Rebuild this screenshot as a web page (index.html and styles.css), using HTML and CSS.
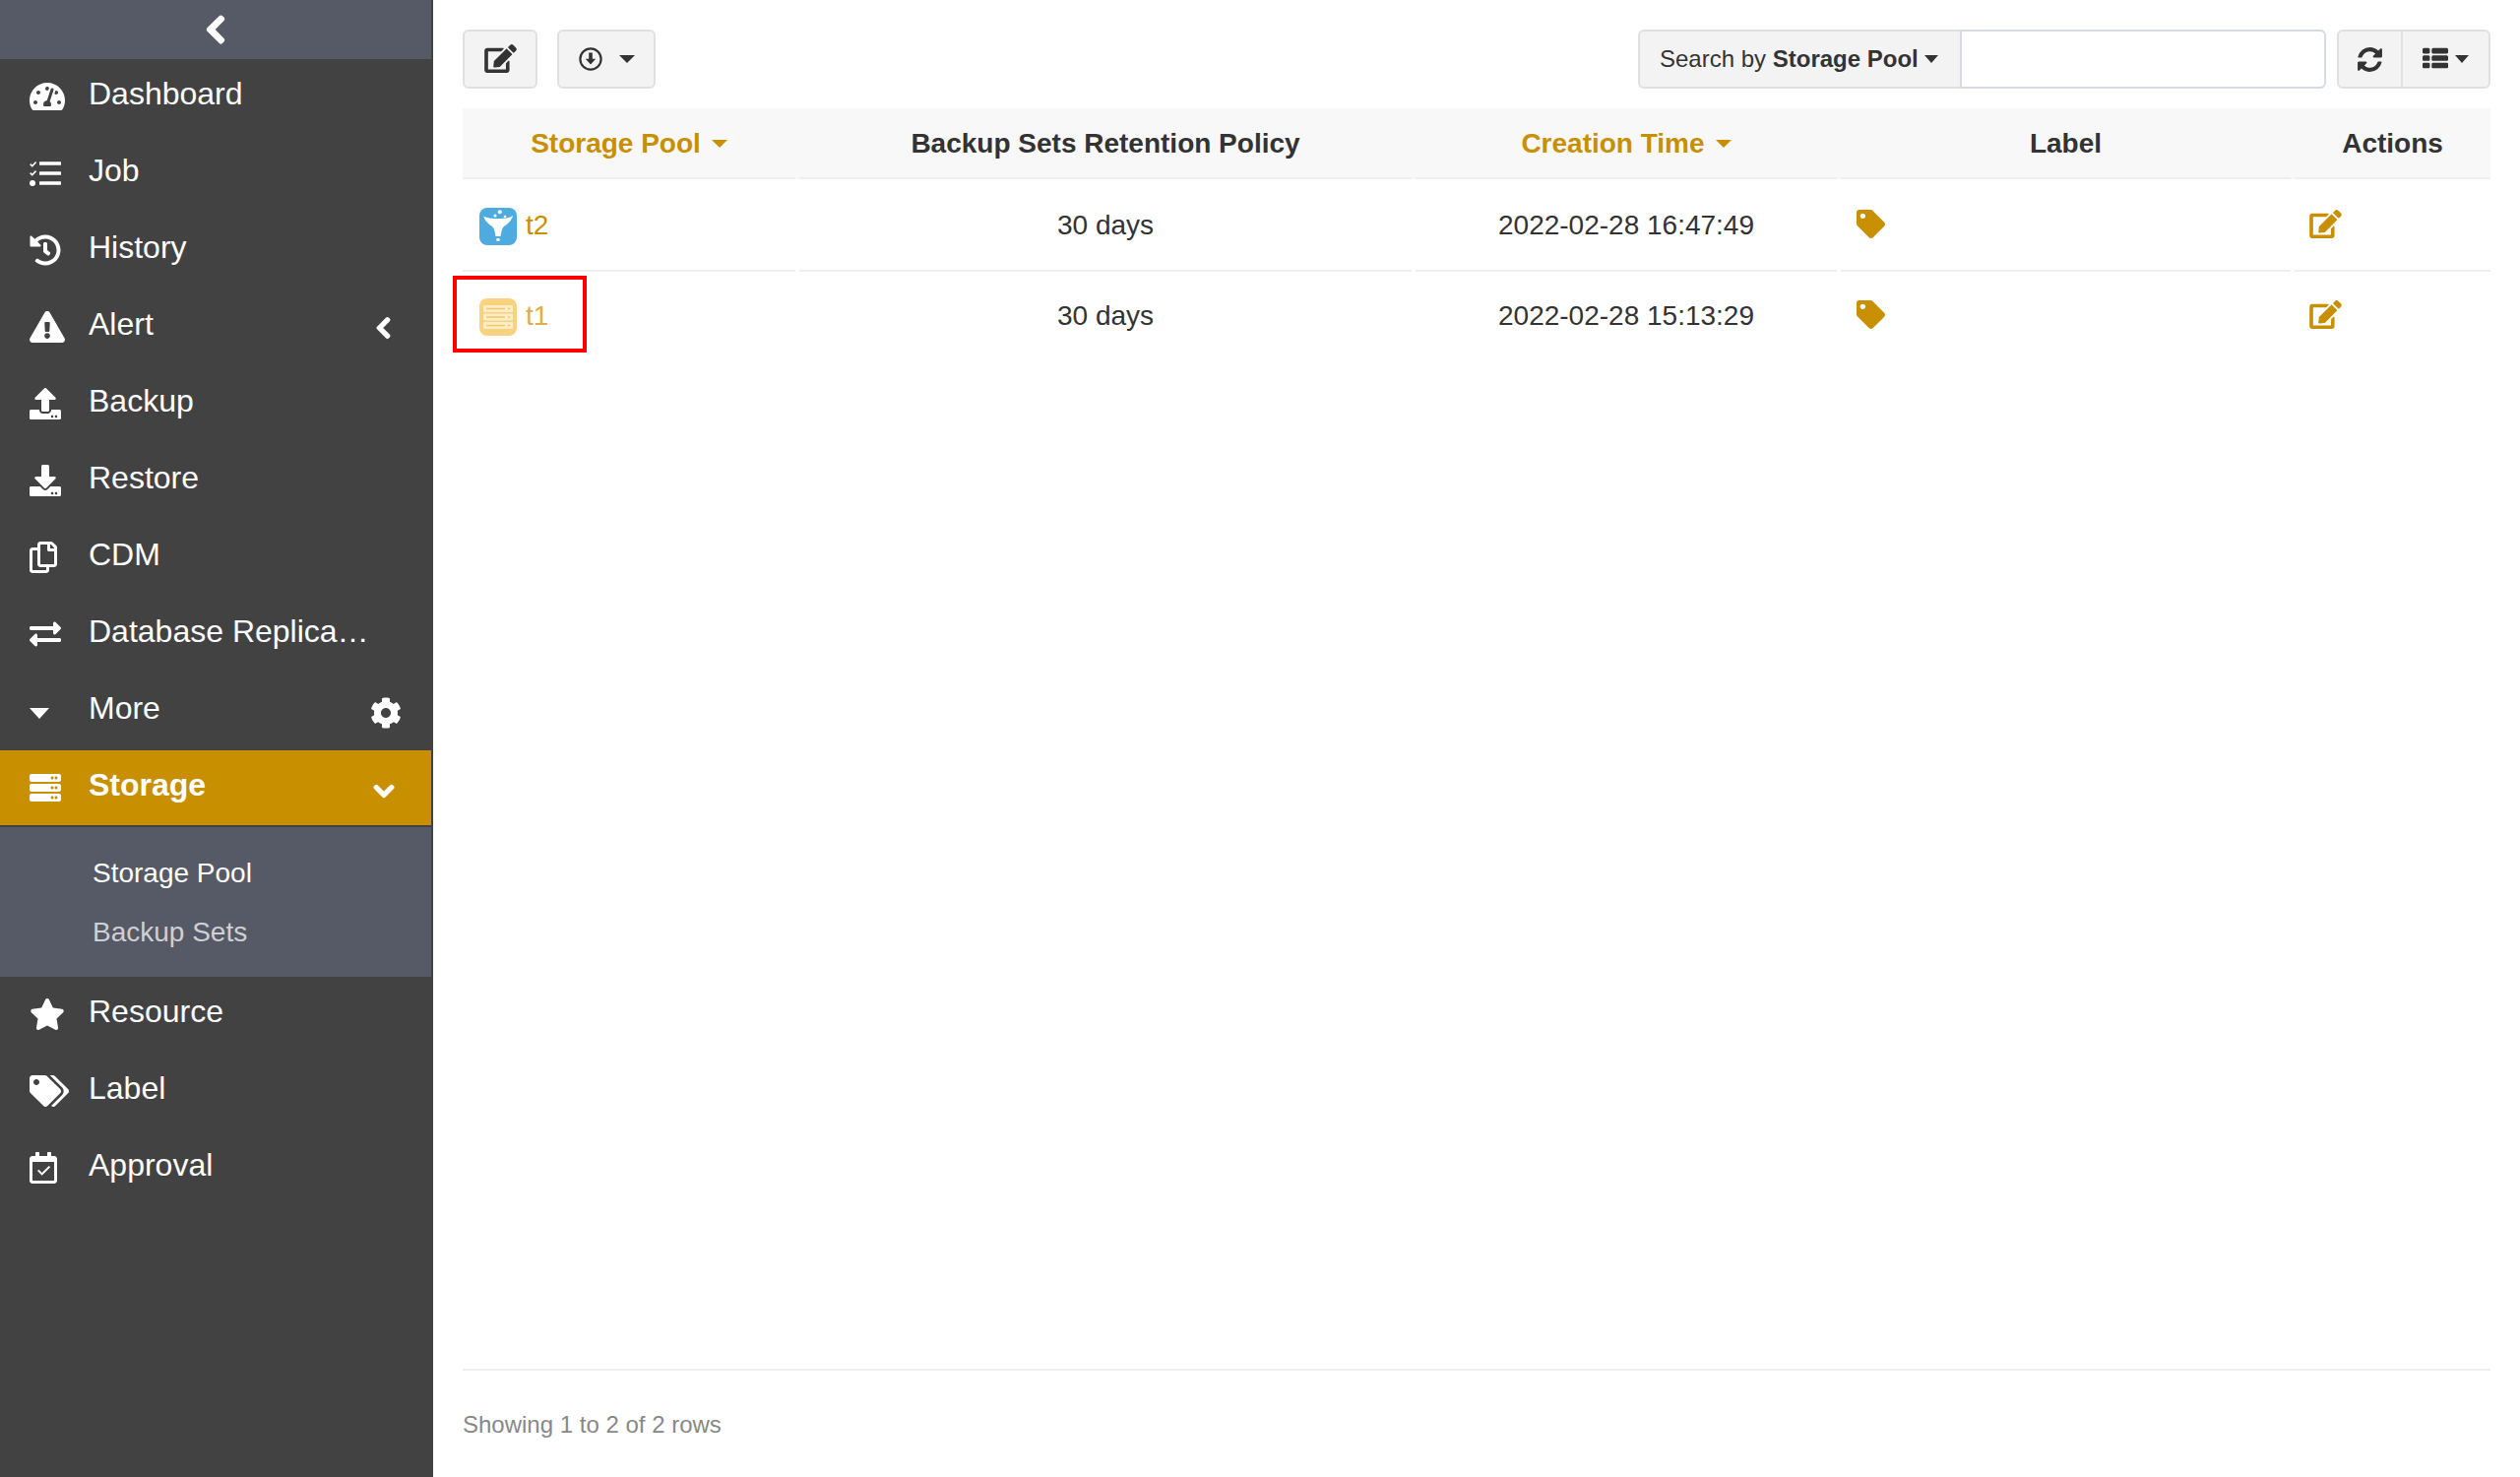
FILE: index.html
```html
<!DOCTYPE html>
<html>
<head>
    <title>Storage Pool</title>
    <link rel="stylesheet" href="styles.css">
</head>
<body>
    <svg class="icon-defs" width="0" height="0">
        <defs>
            <path id="i-tag" d="M0 252.118V48C0 21.49 21.49 0 48 0h204.118a48 48 0 0 1 33.941 14.059l211.882 211.882c18.745 18.745 18.745 49.137 0 67.882L293.823 497.941c-18.745 18.745-49.137 18.745-67.882 0L14.059 286.059A48 48 0 0 1 0 252.118zM112 64c-26.51 0-48 21.49-48 48s21.49 48 48 48 48-21.49 48-48-21.49-48-48-48z"/>
            <path id="i-edit" d="M402.6 83.2l90.2 90.2c3.8 3.8 3.8 10 0 13.8L274.4 405.6l-92.8 10.3c-12.4 1.4-22.9-9.1-21.5-21.5l10.3-92.8L388.8 83.2c3.8-3.8 10-3.8 13.8 0zm162-22.9l-48.8-48.8c-15.2-15.2-39.9-15.2-55.2 0l-35.4 35.4c-3.8 3.8-3.8 10 0 13.8l90.2 90.2c3.8 3.8 10 3.8 13.8 0l35.4-35.4c15.2-15.3 15.2-40 0-55.2zM384 346.2V448H64V128h229.8c3.2 0 6.2-1.3 8.5-3.5l40-40c7.6-7.6 2.2-20.5-8.5-20.5H48C21.5 64 0 85.5 0 112v352c0 26.5 21.5 48 48 48h352c26.5 0 48-21.5 48-48V306.2c0-10.7-12.9-16-20.5-8.5l-40 40c-2.2 2.3-3.5 5.3-3.5 8.5z"/>
            <path id="i-chevron-left" d="M34.52 239.03L228.87 44.69c9.37-9.37 24.57-9.37 33.94 0l22.67 22.67c9.36 9.36 9.37 24.52.04 33.9L131.49 256l154.02 154.75c9.34 9.38 9.32 24.54-.04 33.9l-22.67 22.67c-9.37 9.37-24.57 9.37-33.94 0L34.52 272.97c-9.37-9.37-9.37-24.57 0-33.94z"/>
        </defs>
    </svg>

    <div class="layout">
        <nav class="sidebar">
            <div class="collapse-bar">
                <svg class="chevron-big" viewBox="0 0 320 512"><use href="#i-chevron-left"/></svg>
            </div>
            <ul class="menu">
                <li><a class="menu-item">
                    <span class="menu-icon"><svg viewBox="0 0 576 512"><path d="M288 32C128.94 32 0 160.94 0 320c0 52.8 14.25 102.26 39.06 144.8 5.61 9.62 16.3 15.2 27.44 15.2h443c11.14 0 21.83-5.58 27.44-15.2C561.75 422.26 576 372.8 576 320c0-159.06-128.94-288-288-288zm0 64c14.71 0 26.58 10.13 30.32 23.65-1.11 2.26-2.64 4.23-3.45 6.67l-9.22 27.67c-5.13 3.49-10.97 6.01-17.64 6.01-17.67 0-32-14.33-32-32S270.33 96 288 96zM96 384c-17.67 0-32-14.33-32-32s14.33-32 32-32 32 14.33 32 32-14.33 32-32 32zm48-160c-17.67 0-32-14.33-32-32s14.33-32 32-32 32 14.33 32 32-14.33 32-32 32zm246.77-72.41l-61.33 184C343.13 347.33 352 364.54 352 384c0 11.72-3.38 22.55-8.88 32H232.88c-5.5-9.45-8.88-20.28-8.88-32 0-33.94 26.5-61.43 59.9-63.59l61.34-184.01c4.17-12.56 17.73-19.45 30.36-15.17 12.57 4.19 19.35 17.79 15.17 30.36zm14.66 57.2l15.52-46.55c3.47-1.29 7.13-2.23 11.05-2.23 17.67 0 32 14.33 32 32s-14.33 32-32 32c-11.38-.01-20.89-6.28-26.57-15.22zM480 384c-17.67 0-32-14.33-32-32s14.33-32 32-32 32 14.33 32 32-14.33 32-32 32z"/></svg></span>
                    <span class="menu-label">Dashboard</span>
                </a></li>
                <li><a class="menu-item">
                    <span class="menu-icon"><svg viewBox="0 0 512 512"><path d="M20 96l24 24 52-56 18 18-70 74-42-42zM20 240l24 24 52-56 18 18-70 74-42-42z"/><circle cx="48" cy="416" r="48"/><rect x="160" y="68" width="352" height="56" rx="10"/><rect x="160" y="228" width="352" height="56" rx="10"/><rect x="160" y="388" width="352" height="56" rx="10"/></svg></span>
                    <span class="menu-label">Job</span>
                </a></li>
                <li><a class="menu-item">
                    <span class="menu-icon"><svg viewBox="0 0 512 512"><path d="M504 255.531c.253 136.64-111.18 248.372-247.82 248.468-59.015.042-113.223-20.53-155.822-54.911-11.077-8.94-11.905-25.541-1.839-35.607l11.267-11.267c8.609-8.609 22.353-9.551 31.891-1.984C173.062 425.135 212.781 440 256 440c101.705 0 184-82.311 184-184 0-101.705-82.311-184-184-184-48.814 0-93.149 18.969-126.068 49.932l50.754 50.754c10.08 10.08 2.941 27.314-11.313 27.314H24c-8.837 0-16-7.163-16-16V38.627c0-14.254 17.234-21.393 27.314-11.314l49.372 49.372C129.209 34.136 189.552 8 256 8c136.81 0 247.747 110.78 248 247.531zm-180.912 78.784l9.823-12.63c8.138-10.463 6.253-25.542-4.21-33.679L288 256.349V152c0-13.255-10.745-24-24-24h-16c-13.255 0-24 10.745-24 24v135.651l65.409 50.874c10.463 8.137 25.541 6.253 33.679-4.21z"/></svg></span>
                    <span class="menu-label">History</span>
                </a></li>
                <li><a class="menu-item">
                    <span class="menu-icon"><svg viewBox="0 0 576 512"><path d="M569.517 440.013C587.975 472.007 564.806 512 527.94 512H48.054c-36.937 0-59.999-40.055-41.577-71.987L246.423 23.985c18.467-32.009 64.72-31.951 83.154 0l239.94 416.028zM288 354c-25.405 0-46 20.595-46 46s20.595 46 46 46 46-20.595 46-46-20.595-46-46-46zm-43.673-165.346l7.418 136c.347 6.364 5.609 11.346 11.982 11.346h48.546c6.373 0 11.635-4.982 11.982-11.346l7.418-136c.375-6.874-5.098-12.654-11.982-12.654h-63.383c-6.884 0-12.356 5.78-11.981 12.654z"/></svg></span>
                    <span class="menu-label">Alert</span>
                    <svg class="chevron-small" viewBox="0 0 320 512"><use href="#i-chevron-left"/></svg>
                </a></li>
                <li><a class="menu-item">
                    <span class="menu-icon"><svg viewBox="0 0 512 512"><path d="M296 384h-80c-13.3 0-24-10.7-24-24V192h-87.7c-17.8 0-26.7-21.5-14.1-34.1L242.3 5.7c7.5-7.5 19.8-7.5 27.3 0l152.2 152.2c12.6 12.6 3.7 34.1-14.1 34.1H320v168c0 13.3-10.7 24-24 24zm216-8v112c0 13.3-10.7 24-24 24H24c-13.3 0-24-10.7-24-24V376c0-13.3 10.7-24 24-24h136v8c0 30.9 25.1 56 56 56h80c30.9 0 56-25.1 56-56v-8h136c13.3 0 24 10.7 24 24zm-124 88c0-11-9-20-20-20s-20 9-20 20 9 20 20 20 20-9 20-20zm64 0c0-11-9-20-20-20s-20 9-20 20 9 20 20 20 20-9 20-20z"/></svg></span>
                    <span class="menu-label">Backup</span>
                </a></li>
                <li><a class="menu-item">
                    <span class="menu-icon"><svg viewBox="0 0 512 512"><path d="M216 0h80c13.3 0 24 10.7 24 24v168h87.7c17.8 0 26.7 21.5 14.1 34.1L269.7 378.3c-7.5 7.5-19.8 7.5-27.3 0L90.1 226.1c-12.6-12.6-3.7-34.1 14.1-34.1H192V24c0-13.3 10.7-24 24-24zm296 376v112c0 13.3-10.7 24-24 24H24c-13.3 0-24-10.7-24-24V376c0-13.3 10.7-24 24-24h146.7l49 49c20.1 20.1 52.5 20.1 72.6 0l49-49H488c13.3 0 24 10.7 24 24zm-124 88c0-11-9-20-20-20s-20 9-20 20 9 20 20 20 20-9 20-20zm64 0c0-11-9-20-20-20s-20 9-20 20 9 20 20 20 20-9 20-20z"/></svg></span>
                    <span class="menu-label">Restore</span>
                </a></li>
                <li><a class="menu-item">
                    <span class="menu-icon"><svg viewBox="0 0 448 512"><path d="M433.941 65.941l-51.882-51.882A48 48 0 0 0 348.118 0H176c-26.51 0-48 21.49-48 48v48H48c-26.51 0-48 21.49-48 48v320c0 26.51 21.49 48 48 48h224c26.51 0 48-21.49 48-48v-48h80c26.51 0 48-21.49 48-48V99.882a48 48 0 0 0-14.059-33.941zM266 464H54a6 6 0 0 1-6-6V150a6 6 0 0 1 6-6h74v224c0 26.51 21.49 48 48 48h96v42a6 6 0 0 1-6 6zm128-96H182a6 6 0 0 1-6-6V54a6 6 0 0 1 6-6h106v88c0 13.255 10.745 24 24 24h88v202a6 6 0 0 1-6 6zm6-256h-64V48h9.632c1.591 0 3.117.632 4.243 1.757l48.368 48.368a6 6 0 0 1 1.757 4.243V112z"/></svg></span>
                    <span class="menu-label">CDM</span>
                </a></li>
                <li><a class="menu-item">
                    <span class="menu-icon"><svg viewBox="0 0 512 512"><path d="M0 168v-16c0-13.255 10.745-24 24-24h360V80c0-21.367 25.899-32.042 40.971-16.971l80 80c9.372 9.373 9.372 24.569 0 33.941l-80 80C409.956 271.982 384 261.456 384 240v-48H24c-13.255 0-24-10.745-24-24zm488 152H128v-48c0-21.314-25.862-32.08-40.971-16.971l-80 80c-9.372 9.373-9.372 24.569 0 33.941l80 80C102.057 463.997 128 453.437 128 432v-48h360c13.255 0 24-10.745 24-24v-16c0-13.255-10.745-24-24-24z"/></svg></span>
                    <span class="menu-label">Database Replica…</span>
                </a></li>
                <li><a class="menu-item">
                    <span class="menu-icon"><i class="more-caret"></i></span>
                    <span class="menu-label">More</span>
                    <svg class="gear" viewBox="0 0 512 512"><path d="M487.4 315.7l-42.6-24.6c4.3-23.2 4.3-47 0-70.2l42.6-24.6c4.9-2.8 7.1-8.6 5.5-14-11.1-35.6-30-67.8-54.7-94.6-3.8-4.1-10-5.1-14.8-2.3L380.8 110c-17.9-15.4-38.5-27.3-60.8-35.1V25.8c0-5.6-3.9-10.5-9.4-11.7-36.7-8.2-74.3-7.8-109.2 0-5.5 1.2-9.4 6.1-9.4 11.7V75c-22.2 7.9-42.8 19.8-60.8 35.1L88.7 85.5c-4.9-2.8-11-1.9-14.8 2.3-24.7 26.7-43.6 58.9-54.7 94.6-1.7 5.4.6 11.2 5.5 14L67.3 221c-4.3 23.2-4.3 47 0 70.2l-42.6 24.6c-4.9 2.8-7.1 8.6-5.5 14 11.1 35.6 30 67.8 54.7 94.6 3.8 4.1 10 5.1 14.8 2.3l42.6-24.6c17.9 15.4 38.5 27.3 60.8 35.1v49.2c0 5.6 3.9 10.5 9.4 11.7 36.7 8.2 74.3 7.8 109.2 0 5.5-1.2 9.4-6.1 9.4-11.7v-49.2c22.2-7.9 42.8-19.8 60.8-35.1l42.6 24.6c4.9 2.8 11 1.9 14.8-2.3 24.7-26.7 43.6-58.9 54.7-94.6 1.5-5.5-.7-11.3-5.6-14.1zM256 336c-44.1 0-80-35.9-80-80s35.9-80 80-80 80 35.9 80 80-35.9 80-80 80z"/></svg>
                </a></li>
                <li><a class="menu-item active">
                    <span class="menu-icon"><svg viewBox="0 0 512 512"><path d="M480 160H32c-17.673 0-32-14.327-32-32V64c0-17.673 14.327-32 32-32h448c17.673 0 32 14.327 32 32v64c0 17.673-14.327 32-32 32zm-48-88c-13.255 0-24 10.745-24 24s10.745 24 24 24 24-10.745 24-24-10.745-24-24-24zm-64 0c-13.255 0-24 10.745-24 24s10.745 24 24 24 24-10.745 24-24-10.745-24-24-24zm112 248H32c-17.673 0-32-14.327-32-32v-64c0-17.673 14.327-32 32-32h448c17.673 0 32 14.327 32 32v64c0 17.673-14.327 32-32 32zm-48-88c-13.255 0-24 10.745-24 24s10.745 24 24 24 24-10.745 24-24-10.745-24-24-24zm-64 0c-13.255 0-24 10.745-24 24s10.745 24 24 24 24-10.745 24-24-10.745-24-24-24zm112 248H32c-17.673 0-32-14.327-32-32v-64c0-17.673 14.327-32 32-32h448c17.673 0 32 14.327 32 32v64c0 17.673-14.327 32-32 32zm-48-88c-13.255 0-24 10.745-24 24s10.745 24 24 24 24-10.745 24-24-10.745-24-24-24zm-64 0c-13.255 0-24 10.745-24 24s10.745 24 24 24 24-10.745 24-24-10.745-24-24-24z"/></svg></span>
                    <span class="menu-label">Storage</span>
                    <svg class="chevron-down" viewBox="0 0 448 512"><path d="M207.029 381.476L12.686 187.132c-9.373-9.373-9.373-24.569 0-33.941l22.667-22.667c9.357-9.357 24.522-9.375 33.901-.04L224 284.505l154.745-154.021c9.379-9.335 24.544-9.317 33.901.04l22.667 22.667c9.373 9.373 9.373 24.569 0 33.941L240.971 381.476c-9.373 9.372-24.569 9.372-33.942 0z"/></svg>
                </a>
                <ul class="submenu">
                    <li class="sub-current">Storage Pool</li>
                    <li>Backup Sets</li>
                </ul>
                </li>
                <li><a class="menu-item">
                    <span class="menu-icon"><svg viewBox="0 0 576 512"><path d="M259.3 17.8L194 150.2 47.9 171.5c-26.2 3.8-36.7 36.1-17.7 54.6l105.7 103-25 145.5c-4.5 26.3 23.2 46 46.4 33.7L288 439.6l130.7 68.7c23.2 12.2 50.9-7.4 46.4-33.7l-25-145.5 105.7-103c19-18.5 8.5-50.8-17.7-54.6L382 150.2 316.7 17.8c-11.7-23.6-45.6-23.9-57.4 0z"/></svg></span>
                    <span class="menu-label">Resource</span>
                </a></li>
                <li><a class="menu-item">
                    <span class="menu-icon"><svg viewBox="0 0 640 512"><path d="M497.941 225.941L286.059 14.059A48 48 0 0 0 252.118 0H48C21.49 0 0 21.49 0 48v204.118a48 48 0 0 0 14.059 33.941l211.882 211.882c18.744 18.745 49.136 18.746 67.882 0l204.118-204.118c18.745-18.745 18.745-49.137 0-67.882zM112 160c-26.51 0-48-21.49-48-48s21.49-48 48-48 48 21.49 48 48-21.49 48-48 48zm513.941 133.823L421.823 497.941c-18.745 18.745-49.137 18.745-67.882 0l-.36-.36L527.64 323.522c16.999-16.999 26.36-39.6 26.36-63.64s-9.362-46.641-26.36-63.64L331.397 0h48.721a48 48 0 0 1 33.941 14.059l211.882 211.882c18.745 18.745 18.745 49.137 0 67.882z"/></svg></span>
                    <span class="menu-label">Label</span>
                </a></li>
                <li><a class="menu-item">
                    <span class="menu-icon"><svg viewBox="0 0 448 512"><path fill-rule="evenodd" d="M400 64h-48V12c0-6.627-5.373-12-12-12h-40c-6.627 0-12 5.373-12 12v52H160V12c0-6.627-5.373-12-12-12h-40c-6.627 0-12 5.373-12 12v52H48C21.49 64 0 85.49 0 112v352c0 26.51 21.49 48 48 48h352c26.51 0 48-21.49 48-48V112c0-26.51-21.49-48-48-48zM54 464a6 6 0 0 1-6-6V160h352v298a6 6 0 0 1-6 6H54z"/><path d="M338 244l-22-22-114 112-52-52-22 22 74 74z"/></svg></span>
                    <span class="menu-label">Approval</span>
                </a></li>
            </ul>
        </nav>

        <main class="content">
            <div class="toolbar">
                <div class="toolbar-left">
                    <button class="btn btn-new"><svg class="ico-edit" viewBox="0 0 576 512"><use href="#i-edit"/></svg></button>
                    <button class="btn btn-export">
                        <svg class="ico-download" viewBox="0 0 24 24"><circle cx="12" cy="12" r="10.6" fill="none" stroke="#333" stroke-width="2.2"/><path d="M10.2 5.500h3.600v6.300h3.400L12 17.600l-5.200-5.800h3.400z" fill="#333"/></svg>
                        <i class="caret"></i>
                    </button>
                </div>
                <div class="toolbar-right">
                    <div class="search-group">
                        <div class="search-by">Search by <b>Storage Pool</b><i class="caret caret-small"></i></div>
                        <input class="search-input" type="text">
                    </div>
                    <div class="btn-group">
                        <button class="btn-part btn-refresh"><svg viewBox="0 0 1792 1792"><path d="M1639 1056q0 5-1 7-64 268-268 434.5t-478 166.5q-146 0-282.5-55t-243.5-157l-129 129q-19 19-45 19t-45-19-19-45v-448q0-26 19-45t45-19h448q26 0 45 19t19 45-19 45l-137 137q71 66 161 102t187 36q134 0 250-65t186-179q11-17 53-117 8-23 30-23h192q13 0 22.5 9.5t9.5 22.5zm25-800v448q0 26-19 45t-45 19h-448q-26 0-45-19t-19-45 19-45l138-138q-148-137-349-137-134 0-250 65t-186 179q-11 17-53 117-8 23-30 23h-199q-13 0-22.5-9.5t-9.5-22.5v-7q65-268 270-434.5t480-166.5q146 0 284 55.5t245 156.5l130-129q19-19 45-19t45 19 19 45z"/></svg></button>
                        <button class="btn-part btn-columns"><svg viewBox="0 0 1792 1792"><path d="M512 1248v192q0 40-28 68t-68 28h-320q-40 0-68-28t-28-68v-192q0-40 28-68t68-28h320q40 0 68 28t28 68zm0-512v192q0 40-28 68t-68 28h-320q-40 0-68-28t-28-68v-192q0-40 28-68t68-28h320q40 0 68 28t28 68zm1280 512v192q0 40-28 68t-68 28h-960q-40 0-68-28t-28-68v-192q0-40 28-68t68-28h960q40 0 68 28t28 68zm-1280-1024v192q0 40-28 68t-68 28h-320q-40 0-68-28t-28-68v-192q0-40 28-68t68-28h320q40 0 68 28t28 68zm1280 512v192q0 40-28 68t-68 28h-960q-40 0-68-28t-28-68v-192q0-40 28-68t68-28h960q40 0 68 28t28 68zm0-512v192q0 40-28 68t-68 28h-960q-40 0-68-28t-28-68v-192q0-40 28-68t68-28h960q40 0 68 28t28 68z"/></svg><i class="caret caret-small"></i></button>
                    </div>
                </div>
            </div>

            <div class="table-wrap">
                <table class="pool-table">
                    <thead>
                        <tr>
                            <th class="sortable">Storage Pool<i class="caret caret-gold"></i></th>
                            <th>Backup Sets Retention Policy</th>
                            <th class="sortable">Creation Time<i class="caret caret-gold"></i></th>
                            <th>Label</th>
                            <th>Actions</th>
                        </tr>
                    </thead>
                    <tbody>
                        <tr>
                            <td class="cell-name">
                                <svg class="pool-icon" viewBox="0 0 38 38"><rect width="38" height="38" rx="8" fill="#4eabdf"/><path d="M3.500 8C8 11 14 11 19 11s11 0 15-3c-1 5-6 9-9 11-1.500 1-2 3-2.500 5l-1 5h-5l-1-5c-.5-2-1-4-2.500-5-3-2-8-6-9-11z" fill="#fff"/><circle cx="16" cy="8" r="1.500" fill="#fff"/><circle cx="20.700" cy="4.300" r="2" fill="#fff"/><circle cx="26" cy="9" r="1.300" fill="#fff"/><circle cx="19" cy="32.500" r="1.800" fill="#fff"/></svg>
                                <a class="pool-link">t2</a>
                            </td>
                            <td class="cell-center">30 days</td>
                            <td class="cell-center">2022-02-28 16:47:49</td>
                            <td class="cell-icon"><svg class="ico-tag" viewBox="0 0 512 512"><use href="#i-tag"/></svg></td>
                            <td class="cell-icon"><svg class="ico-action" viewBox="0 0 576 512"><use href="#i-edit"/></svg></td>
                        </tr>
                        <tr>
                            <td class="cell-name faded">
                                <svg class="pool-icon" viewBox="0 0 38 38"><rect width="38" height="38" rx="8" fill="#fad27d"/><rect x="4" y="7" width="30" height="7" rx="1" fill="#fdeec9"/><rect x="4" y="15.500" width="30" height="7" rx="1" fill="#fdeec9"/><rect x="4" y="24" width="30" height="7" rx="1" fill="#fdeec9"/><rect x="7" y="9.800" width="19" height="1.500" fill="#f6c765"/><rect x="7" y="18.300" width="19" height="1.500" fill="#f6c765"/><rect x="7" y="26.800" width="19" height="1.500" fill="#f6c765"/><circle cx="30" cy="10.500" r="1.100" fill="#f6c765"/><circle cx="30" cy="19" r="1.100" fill="#f6c765"/><circle cx="30" cy="27.500" r="1.100" fill="#f6c765"/></svg>
                                <a class="pool-link">t1</a>
                                <span class="red-box"></span>
                            </td>
                            <td class="cell-center">30 days</td>
                            <td class="cell-center">2022-02-28 15:13:29</td>
                            <td class="cell-icon"><svg class="ico-tag" viewBox="0 0 512 512"><use href="#i-tag"/></svg></td>
                            <td class="cell-icon"><svg class="ico-action" viewBox="0 0 576 512"><use href="#i-edit"/></svg></td>
                        </tr>
                    </tbody>
                </table>
            </div>

            <div class="table-footer">Showing 1 to 2 of 2 rows</div>
        </main>
    </div>
</body>
</html>
```

FILE: styles.css
```css
* {
    box-sizing: border-box;
}

html, body {
    margin: 0;
    height: 100%;
}

body {
    font-family: "Liberation Sans", Arial, sans-serif;
    color: #333333;
    background-color: #ffffff;
}

.icon-defs {
    display: block;
    height: 0;
}

.layout {
    display: flex;
    height: 1500px;
}

/* sidebar */

.sidebar {
    width: 440px;
    flex-shrink: 0;
    padding-right: 2px;
    background-color: #424242;
    color: #ffffff;
}

.sidebar svg {
    fill: #ffffff;
}

.collapse-bar {
    height: 60px;
    display: flex;
    align-items: center;
    justify-content: center;
    background-color: #565a66;
}

.chevron-big {
    width: 20px;
    height: 32px;
    stroke: #ffffff;
    stroke-width: 30;
    overflow: visible;
}

.menu, .submenu {
    list-style: none;
    margin: 0;
    padding: 0;
}

.menu-item {
    display: flex;
    align-items: center;
    height: 76px;
    margin-bottom: 2px;
    padding-left: 30px;
    font-size: 32px;
}

.menu-icon {
    width: 60px;
    flex-shrink: 0;
    display: flex;
    align-items: center;
    height: 32px;
}

.menu-icon svg {
    height: 32px;
    display: block;
}

.menu-label {
    position: relative;
    top: -3px;
    white-space: nowrap;
}

.chevron-small {
    width: 15px;
    height: 24px;
    margin-left: auto;
    margin-right: 41px;
    position: relative;
    top: 1px;
    stroke: #ffffff;
    stroke-width: 34;
    overflow: visible;
}

.gear {
    width: 32px;
    height: 32px;
    margin-left: auto;
    margin-right: 30px;
    position: relative;
    top: 2px;
}

.chevron-down {
    width: 20px;
    height: 23px;
    margin-left: auto;
    margin-right: 38px;
    position: relative;
    top: 3px;
    stroke: #ffffff;
    stroke-width: 36;
    overflow: visible;
}

.more-caret {
    display: block;
    width: 0;
    height: 0;
    border-left: 10px solid transparent;
    border-right: 10px solid transparent;
    border-top: 11px solid #ffffff;
    position: relative;
    top: 2px;
}

.menu-item.active {
    background-color: #c88f00;
    font-weight: bold;
}

.submenu {
    height: 152px;
    padding-top: 18px;
    background-color: #565a66;
    margin-bottom: 0;
}

.submenu li {
    height: 60px;
    padding-left: 94px;
    font-size: 28px;
    line-height: 58px;
    color: #cdd0d4;
}

.submenu .sub-current {
    color: #ffffff;
}

/* main area */

.content {
    flex: 1;
    display: flex;
    flex-direction: column;
    padding: 30px 30px 0;
    min-width: 0;
}

.toolbar {
    display: flex;
    justify-content: space-between;
    height: 60px;
    margin-bottom: 20px;
}

.toolbar-left, .toolbar-right {
    display: flex;
}

.toolbar-left {
    gap: 20px;
}

.toolbar-right {
    gap: 11px;
}

.btn {
    height: 60px;
    padding: 0;
    display: flex;
    align-items: center;
    justify-content: center;
    background-color: #f3f3f3;
    border: 2px solid #e0e0e0;
    border-radius: 6px;
}

.btn-new {
    width: 76px;
    padding-bottom: 2px;
}

.ico-edit {
    width: 33px;
    height: 29px;
    fill: #333333;
}

.btn-export {
    width: 100px;
    gap: 17px;
}

.ico-download {
    width: 24px;
    height: 24px;
}

.caret {
    display: inline-block;
    width: 0;
    height: 0;
    border-left: 8px solid transparent;
    border-right: 8px solid transparent;
    border-top: 8px solid #333333;
}

.caret-small {
    border-left-width: 7.5px;
    border-right-width: 7.5px;
}

.caret-gold {
    border-top-color: #c88f00;
    margin-left: 11px;
    vertical-align: 3px;
}

.search-group {
    display: flex;
    width: 699px;
    height: 60px;
}

.search-by {
    width: 327px;
    display: flex;
    align-items: center;
    padding-left: 20px;
    font-size: 24px;
    white-space: pre;
    background-color: #f3f3f3;
    border: 2px solid #e0e0e0;
    border-right: none;
    border-radius: 6px 0 0 6px;
}

.search-by .caret {
    margin-left: 6px;
}

.search-input {
    flex: 1;
    min-width: 0;
    height: 60px;
    background-color: #ffffff;
    border: 2px solid #d6dae3;
    border-radius: 0 6px 6px 0;
}

.btn-group {
    display: flex;
    width: 156px;
    height: 60px;
    background-color: #f3f3f3;
    border: 2px solid #e0e0e0;
    border-radius: 6px;
}

.btn-part {
    display: flex;
    align-items: center;
    justify-content: center;
    padding: 0;
    background: none;
    border: none;
}

.btn-refresh {
    width: 65px;
    border-right: 2px solid #e0e0e0;
}

.btn-refresh svg {
    width: 29px;
    height: 29px;
    fill: #333333;
}

.btn-columns {
    flex: 1;
    gap: 7px;
}

.btn-columns svg {
    width: 26px;
    height: 26px;
    fill: #333333;
}

/* table */

.table-wrap {
    flex: 1;
}

.pool-table, .pool-table thead, .pool-table tbody {
    display: block;
}

.pool-table tr {
    display: grid;
    grid-template-columns: 338px 622px 428px 457px 199px;
    column-gap: 4px;
}

.pool-table thead tr {
    background-color: #f8f8f8;
}

.pool-table th {
    height: 72px;
    padding-top: 2px;
    display: flex;
    align-items: center;
    justify-content: center;
    font-size: 28px;
    color: #333333;
    background-color: transparent;
    border-bottom: 2px solid #efefef;
}

.pool-table th.sortable {
    color: #c88f00;
}

.pool-table td {
    height: 94px;
    padding-top: 4px;
    display: flex;
    align-items: center;
    font-size: 28px;
    border-bottom: 2px solid #efefef;
}

.pool-table td.cell-center {
    padding-bottom: 2px;
}

.pool-table tbody tr:last-child td {
    height: 92px;
    padding-top: 0;
    padding-bottom: 1px;
    border-bottom: none;
}

.pool-table tbody tr:last-child td.cell-center {
    padding-bottom: 2px;
}

.cell-center {
    justify-content: center;
}

.cell-name {
    position: relative;
    padding-left: 17px;
}

.pool-icon {
    width: 38px;
    height: 38px;
    margin-right: 9px;
    flex-shrink: 0;
}

.pool-link {
    color: #c88f00;
    position: relative;
    top: -1px;
}

.faded .pool-link {
    color: #dcae4d;
}

.cell-icon {
    padding-left: 16px;
}

.ico-tag {
    width: 29px;
    height: 29px;
    fill: #c88f00;
    position: relative;
    top: -2px;
}

.ico-action {
    width: 33px;
    height: 29px;
    fill: #c88f00;
    position: relative;
    top: -2px;
    left: -1px;
}

/* annotation drawn over the first row */
.red-box {
    position: absolute;
    left: -10px;
    top: 4px;
    width: 136px;
    height: 78px;
    border: 4px solid #ff0000;
}

.table-footer {
    height: 110px;
    padding-top: 38px;
    font-size: 24px;
    line-height: 34px;
    color: #888888;
    border-top: 2px solid #efefef;
}
```
